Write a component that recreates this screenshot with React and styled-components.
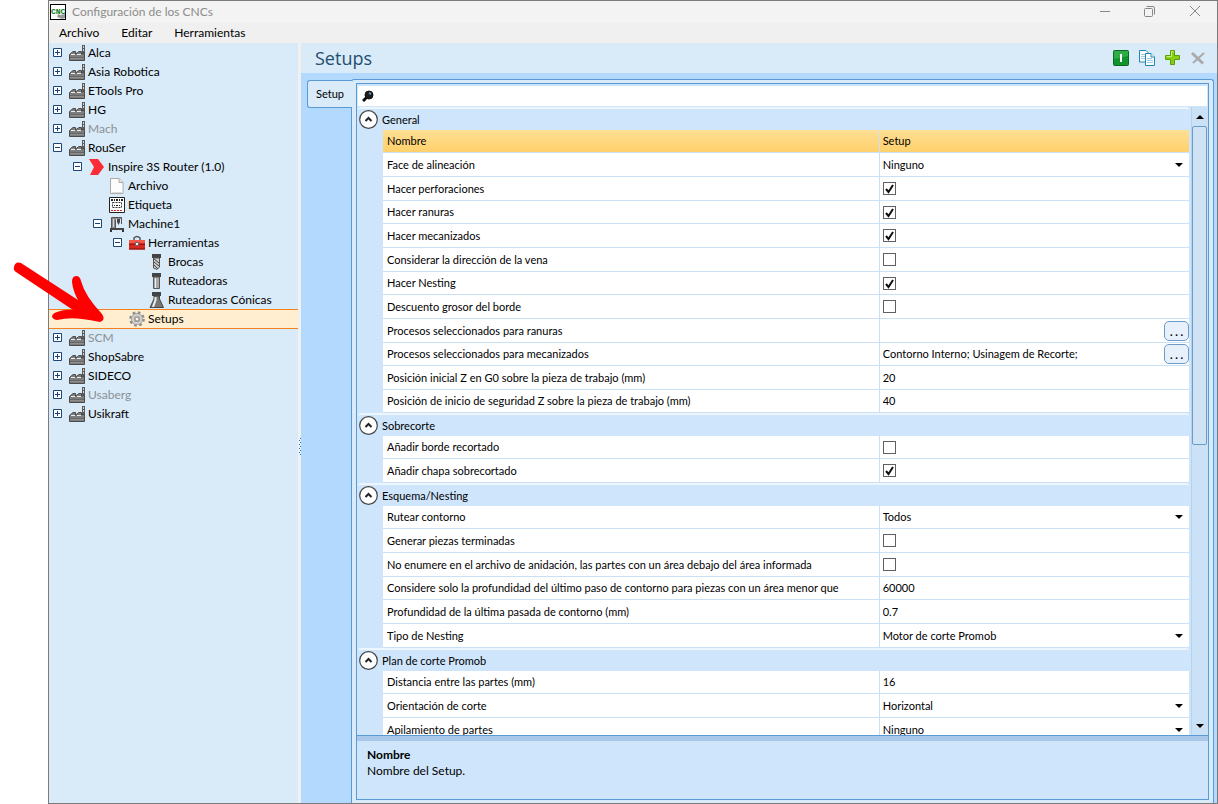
import React, { useState } from 'react';
import styled, { createGlobalStyle, css } from 'styled-components';

const TREE = [
  { label: 'Alca', level: 0, icon: 'factory', state: 'closed' },
  { label: 'Asia Robotica', level: 0, icon: 'factory', state: 'closed' },
  { label: 'ETools Pro', level: 0, icon: 'factory', state: 'closed' },
  { label: 'HG', level: 0, icon: 'factory', state: 'closed' },
  { label: 'Mach', level: 0, icon: 'factory', state: 'closed', muted: true },
  { label: 'RouSer', level: 0, icon: 'factory', state: 'open' },
  { label: 'Inspire 3S Router (1.0)', level: 1, icon: 'chevron', state: 'open' },
  { label: 'Archivo', level: 2, icon: 'file' },
  { label: 'Etiqueta', level: 2, icon: 'tag' },
  { label: 'Machine1', level: 2, icon: 'machine', state: 'open' },
  { label: 'Herramientas', level: 3, icon: 'toolbox', state: 'open' },
  { label: 'Brocas', level: 4, icon: 'drill' },
  { label: 'Ruteadoras', level: 4, icon: 'router' },
  { label: 'Ruteadoras Cónicas', level: 4, icon: 'cone' },
  { label: 'Setups', level: 3, icon: 'gear', selected: true },
  { label: 'SCM', level: 0, icon: 'factory', state: 'closed', muted: true },
  { label: 'ShopSabre', level: 0, icon: 'factory', state: 'closed' },
  { label: 'SIDECO', level: 0, icon: 'factory', state: 'closed' },
  { label: 'Usaberg', level: 0, icon: 'factory', state: 'closed', muted: true },
  { label: 'Usikraft', level: 0, icon: 'factory', state: 'closed' },
];

const SECTIONS = [
  {
    title: 'General',
    rows: [
      { label: 'Nombre', type: 'text', value: 'Setup', selected: true },
      { label: 'Face de alineación', type: 'select', value: 'Ninguno' },
      { label: 'Hacer perforaciones', type: 'check', value: true },
      { label: 'Hacer ranuras', type: 'check', value: true },
      { label: 'Hacer mecanizados', type: 'check', value: true },
      { label: 'Considerar la dirección de la vena', type: 'check', value: false },
      { label: 'Hacer Nesting', type: 'check', value: true },
      { label: 'Descuento grosor del borde', type: 'check', value: false },
      { label: 'Procesos seleccionados para ranuras', type: 'dialog', value: '' },
      {
        label: 'Procesos seleccionados para mecanizados',
        type: 'dialog',
        value: 'Contorno Interno; Usinagem de Recorte;',
      },
      { label: 'Posición inicial Z en G0 sobre la pieza de trabajo (mm)', type: 'text', value: '20' },
      {
        label: 'Posición de inicio de seguridad Z sobre la pieza de trabajo (mm)',
        type: 'text',
        value: '40',
      },
    ],
  },
  {
    title: 'Sobrecorte',
    rows: [
      { label: 'Añadir borde recortado', type: 'check', value: false },
      { label: 'Añadir chapa sobrecortado', type: 'check', value: true },
    ],
  },
  {
    title: 'Esquema/Nesting',
    rows: [
      { label: 'Rutear contorno', type: 'select', value: 'Todos' },
      { label: 'Generar piezas terminadas', type: 'check', value: false },
      {
        label: 'No enumere en el archivo de anidación, las partes con un área debajo del área informada',
        type: 'check',
        value: false,
      },
      {
        label: 'Considere solo la profundidad del último paso de contorno para piezas con un área menor que',
        type: 'text',
        value: '60000',
      },
      { label: 'Profundidad de la última pasada de contorno (mm)', type: 'text', value: '0.7' },
      { label: 'Tipo de Nesting', type: 'select', value: 'Motor de corte Promob' },
    ],
  },
  {
    title: 'Plan de corte Promob',
    rows: [
      { label: 'Distancia entre las partes (mm)', type: 'text', value: '16' },
      { label: 'Orientación de corte', type: 'select', value: 'Horizontal' },
      { label: 'Apilamiento de partes', type: 'select', value: 'Ninguno' },
    ],
  },
];

const ICONS = {
  factory: (
    <>
      <path d="M13 0h3v9h-3z" fill="#5a5a5a" />
      <path d="M14 1h1v2h-1zM14 4h1v2h-1z" fill="#d5d5d5" />
      <path d="M.5 15.500V9.500L4 6.500H6.500V9L10 6.500h2.500V9l3-1v7.500z" fill="#7d7d7d" stroke="#4c4c4c" />
      <path d="M2 9.500h4M8 9.500h4" stroke="#ececec" />
      <path d="M1 12.500h14" stroke="#666" />
      <path d="M1 13.500h14" stroke="#8e8e8e" />
    </>
  ),
  chevron: <path d="M0 0h9l6 8-6 8H1l4-8z" fill="#fa2d37" />,
  file: (
    <>
      <path d="M1.500.5h8.500l4 4v11H1.500z" fill="#fdfdfd" stroke="#aaa" />
      <path d="M10 .5v4h4" fill="#e4e4e4" stroke="#aaa" />
      <path d="M3 14.500h10M13.500 7v8" stroke="#ddd" />
    </>
  ),
  tag: (
    <>
      <path d="M.5.5h15v15H.5z" fill="#fff" stroke="#222" />
      <path d="M2 3h12" stroke="#222" strokeWidth="2" strokeDasharray="2 1 1 1" />
      <path d="M3.500 5.500h9v5h-9z" stroke="#333" strokeDasharray="2 1" />
      <path d="M5 8.500h1M7 8.500h2M10 8.500h1" stroke="#222" />
      <path d="M2 13.500h12" stroke="#e02020" strokeDasharray="2 1" />
    </>
  ),
  machine: (
    <>
      <path d="M3 1h9v2H7v9H3z" fill="#8c8c8c" />
      <path d="M2.500 12V1.500H12.500V8" stroke="#555" />
      <path d="M4.500 3v8" stroke="#d5d5d5" />
      <path d="M6.500 12V4" stroke="#555" />
      <path d="M8 3h3v3L9.500 9 8 6z" fill="#444" />
      <path d="M1 12h14v2H1z" fill="#444" />
      <path d="M1 14h2v2H1zM13 14h2v2h-2z" fill="#333" />
    </>
  ),
  toolbox: (
    <>
      <path d="M5 5V3q3-3 6 0V5" fill="none" stroke="#555" strokeWidth="1.500" />
      <path d="M0 5h16v9.500H0z" fill="#d8281f" />
      <path d="M0 5h16v3H0z" fill="#f0564a" />
      <path d="M0 9.500h16" stroke="#9e130d" />
      <path d="M6.500 7.500h3v3h-3z" fill="#f5f5f5" stroke="#666" />
      <path d="M0 14h16" stroke="#8d0f0a" />
    </>
  ),
  drill: (
    <>
      <path d="M3 0h9v4H3z" fill="#444" />
      <path d="M4.500 4h6v9L8 15.500 4.500 14z" fill="#ccc" stroke="#555" />
      <path d="M5 5l5 4M5 8l5 4M5 11l4 4" stroke="#444" />
    </>
  ),
  router: (
    <>
      <path d="M3 0h9v4H3z" fill="#444" />
      <path d="M4.500 4h6v11.500h-6z" fill="#a8a8a8" stroke="#555" />
      <path d="M6.500 5v10" stroke="#eee" />
    </>
  ),
  cone: (
    <>
      <path d="M3 0h9v4H3z" fill="#444" />
      <path d="M5 4h5.500v3l4 8.500H1L5 7z" fill="#777" stroke="#444" />
      <path d="M6.500 5v3L4 15" fill="none" stroke="#eee" strokeWidth="2" />
    </>
  ),
  gear: (
    <>
      <circle cx="8" cy="8" r="6.300" fill="none" stroke="#8c8c8c" strokeWidth="3" strokeDasharray="2.500 2.450" />
      <circle cx="8" cy="8" r="4.200" fill="none" stroke="#999" strokeWidth="3.600" />
      <circle cx="8" cy="8" r="4.200" fill="none" stroke="#cfcfcf" strokeWidth="2.200" />
      <circle cx="8" cy="8" r="2" fill="#fff6e0" stroke="#888" />
    </>
  ),
};

function Icon({ name }) {
  return (
    <svg width="16" height="16" viewBox="0 0 16 16" fill="none" aria-hidden="true">
      {ICONS[name]}
    </svg>
  );
}

function Expander({ open }) {
  return (
    <svg width="9" height="9" viewBox="0 0 9 9" aria-hidden="true">
      <path d="M.5.5h8v8h-8z" fill="#fff" stroke="#1d4575" />
      <path d={open ? 'M2 4.500h5' : 'M2 4.500h5M4.500 2v5'} stroke="#1d3f78" />
    </svg>
  );
}

function Triangle({ up }) {
  return (
    <svg width="8" height="4" viewBox="0 0 8 4" aria-hidden="true">
      <path d={up ? 'M0 4h8L4 0z' : 'M0 0h8L4 4z'} fill="#000" />
    </svg>
  );
}

function TreePanel() {
  const [selected, setSelected] = useState('Setups');
  return (
    <Tree aria-label="CNCs">
      {TREE.map(node => (
        <TreeRow
          key={node.label}
          type="button"
          $level={node.level}
          $muted={node.muted}
          $selected={node.label === selected}
          onClick={() => setSelected(node.label)}
        >
          <ExpanderSlot>{node.state && <Expander open={node.state === 'open'} />}</ExpanderSlot>
          <Icon name={node.icon} />
          <span>{node.label}</span>
        </TreeRow>
      ))}
    </Tree>
  );
}

function Editor({ id, row }) {
  const { type, value } = row;
  if (type === 'check') {
    return (
      <CheckWrap>
        <input type="checkbox" id={id} defaultChecked={value} />
        <svg width="13" height="13" viewBox="0 0 13 13" fill="none" aria-hidden="true">
          <path d="M3 7l2.500 3L10 3" stroke="#111" strokeWidth="2" />
        </svg>
      </CheckWrap>
    );
  }
  if (type === 'select') {
    return (
      <SelectWrap>
        <select id={id} defaultValue={value}>
          <option>{value}</option>
        </select>
        <Triangle />
      </SelectWrap>
    );
  }
  return (
    <TextWrap>
      <input type="text" id={id} defaultValue={value} />
      {type === 'dialog' && (
        <MoreButton type="button" aria-label={`Editar ${row.label}`}>
          . . .
        </MoreButton>
      )}
    </TextWrap>
  );
}

function Section({ section, index }) {
  return (
    <SectionBox>
      <SectionTitle>
        <CollapseButton type="button" aria-label={`Contraer ${section.title}`}>
          <svg width="19" height="19" viewBox="0 0 19 19" fill="none" aria-hidden="true">
            <circle cx="9.500" cy="9.500" r="8.800" fill="#fff" stroke="#444" strokeWidth="1.200" />
            <path d="M6.500 11l3-3 3 3" stroke="#222" strokeWidth="2" />
          </svg>
        </CollapseButton>
        {section.title}
      </SectionTitle>
      <Grid>
        <colgroup>
          <NameCol />
          <col />
        </colgroup>
        <tbody>
          {section.rows.map((row, i) => {
            const id = `prop-${index}-${i}`;
            return (
              <GridRow key={id} $selected={row.selected}>
                <th scope="row">
                  <label htmlFor={id}>{row.label}</label>
                </th>
                <td>
                  <Editor id={id} row={row} />
                </td>
              </GridRow>
            );
          })}
        </tbody>
      </Grid>
    </SectionBox>
  );
}

function WindowControls() {
  return (
    <Controls>
      <button type="button" aria-label="Minimizar">
        <svg width="12" height="12" viewBox="0 0 12 12" aria-hidden="true">
          <path d="M1 5.500h10" stroke="#888" />
        </svg>
      </button>
      <button type="button" aria-label="Restaurar">
        <svg width="12" height="12" viewBox="0 0 12 12" fill="none" stroke="#888" aria-hidden="true">
          <rect x=".5" y="2.500" width="8" height="8" rx="1" />
          <path d="M2.500.5h6.500q1.500 0 1.500 1.500v6.500" />
        </svg>
      </button>
      <button type="button" aria-label="Cerrar">
        <svg width="12" height="12" viewBox="0 0 12 12" stroke="#888" aria-hidden="true">
          <path d="M1 0l10 10M11 0L1 10" />
        </svg>
      </button>
    </Controls>
  );
}

function Toolbar() {
  return (
    <ToolbarBox>
      <button type="button" aria-label="Activar">
        <svg width="16" height="16" viewBox="0 0 16 16" aria-hidden="true">
          <rect x=".5" y=".5" width="15" height="15" rx="1" fill="#12932c" stroke="#0a6b1f" />
          <path d="M1 1h14v5L1 9z" fill="#2fae48" />
          <path d="M7 4h2v8H7z" fill="#fff" />
        </svg>
      </button>
      <button type="button" aria-label="Copiar">
        <svg width="16" height="16" viewBox="0 0 16 16" fill="#fff" stroke="#1f86b8" aria-hidden="true">
          <path d="M.5.500H7l3 3v8.500H.5z" />
          <path d="M2 4.500h4M2 6.500h5M2 8.500h5" stroke="#9ccbe4" />
          <path d="M6.500 3.500H12l3.500 3.500v8.500h-9z" />
          <path d="M12 3.500V7h3.500" />
          <path d="M8 8.500h5M8 10.500h6M8 12.500h6" stroke="#9ccbe4" />
        </svg>
      </button>
      <button type="button" aria-label="Agregar">
        <svg width="16" height="16" viewBox="0 0 16 16" aria-hidden="true">
          <path d="M5.500.5h4v5h5v4h-5v5h-4v-5h-5v-4h5z" fill="#86cf10" stroke="#57a008" />
          <path d="M8.500 1.500h-2v5h-5" stroke="#c8f07a" fill="none" />
        </svg>
      </button>
      <button type="button" aria-label="Eliminar" disabled>
        <svg width="16" height="16" viewBox="0 0 16 16" fill="none" stroke="#aaa" aria-hidden="true">
          <path d="M1 3l11 10.500" strokeWidth="3" />
          <path d="M13 3L2 13" strokeWidth="2" />
        </svg>
      </button>
    </ToolbarBox>
  );
}

export default function App() {
  return (
    <Page>
      <GlobalStyle />
      <Window>
        <TitleBar>
          <svg width="16" height="16" viewBox="0 0 16 16" aria-hidden="true">
            <rect x=".5" y=".5" width="15" height="15" fill="#fff" stroke="#000" />
            <path d="M7 13l1-3 2 1 5-1v4l-3 1z" fill="#999" />
            <text x="1" y="10" fontFamily="Liberation Mono" fontSize="8" fontWeight="700" fill="#0a7a1c">
              CNC
            </text>
          </svg>
          <h1>Configuración de los CNCs</h1>
          <WindowControls />
        </TitleBar>
        <MenuBar>
          <button type="button">Archivo</button>
          <button type="button">Editar</button>
          <button type="button">Herramientas</button>
        </MenuBar>
        <Body>
          <TreePanel />
          <Splitter>
            <svg width="3" height="18" viewBox="0 0 3 18" aria-hidden="true">
              <path
                d="M2 0h1v1H2zM1 2h1v1H1zM2 4h1v1H2zM1 6h1v1H1zM2 8h1v1H2zM1 10h1v1H1zM2 12h1v1H2zM1 14h1v1H1zM2 16h1v1H2z"
                fill="#1976d2"
              />
            </svg>
          </Splitter>
          <Main>
            <MainHeader>
              <h2>Setups</h2>
              <Toolbar />
            </MainHeader>
            <TabArea>
              <TabButton type="button">Setup</TabButton>
              <TabPane>
                <PropertyBox>
                  <SearchBox>
                    <svg width="12" height="12" viewBox="0 0 12 12" aria-hidden="true">
                      <path d="M1 11l4-4" stroke="#111" strokeWidth="3" />
                      <circle cx="7" cy="5" r="4" fill="#1c1c1c" stroke="#111" />
                      <path d="M7 3l2 1" stroke="#5b8fc0" strokeWidth="2" />
                    </svg>
                    <input type="text" aria-label="Buscar" />
                  </SearchBox>
                  <ScrollArea>
                    <Sections>
                      {SECTIONS.map((section, i) => (
                        <Section key={section.title} section={section} index={i} />
                      ))}
                    </Sections>
                    <ScrollBar>
                      <button type="button" aria-label="Subir">
                        <Triangle up />
                      </button>
                      <ScrollTrack>
                        <ScrollThumb />
                      </ScrollTrack>
                      <button type="button" aria-label="Bajar">
                        <Triangle />
                      </button>
                    </ScrollBar>
                  </ScrollArea>
                  <Description>
                    <strong>Nombre</strong>
                    <p>Nombre del Setup.</p>
                  </Description>
                </PropertyBox>
              </TabPane>
            </TabArea>
          </Main>
        </Body>
      </Window>
      <Pointer width="94" height="66" viewBox="0 0 94 66" aria-hidden="true">
        <path
          d="M1 6Q2 0 8 2L65 39Q60 30 59 21Q59 15 63 15Q67 15 68 20Q72 35 89 53Q93 59 87 61Q78 59 69 58Q57 56 44 59Q39 58 39 55Q40 52 44 51Q52 48 60 49L3 11Q0 9 1 6z"
          fill="#f00"
        />
      </Pointer>
    </Page>
  );
}

const GlobalStyle = createGlobalStyle`
  * {
    box-sizing: border-box;
  }
  body {
    margin: 0;
    background: #fff;
    color: #000;
    font-family: Lato, 'Noto Sans', sans-serif;
    font-size: 12px;
    line-height: 16px;
  }
  h1, h2, p {
    margin: 0;
    font-weight: 400;
  }
  button, input, select {
    margin: 0;
    padding: 0;
    border: none;
    border-radius: 0;
    background: none;
    color: inherit;
    font: inherit;
  }
  svg {
    display: block;
    flex: none;
  }
`;

const Page = styled.div`
  position: relative;
  height: 100vh;
  padding-left: 48px;
`;

const Window = styled.div`
  height: 100%;
  display: flex;
  flex-direction: column;
  border: 1px solid #7b7b7b;
  background: #f0f0f0;
`;

const TitleBar = styled.header`
  height: 22px;
  display: flex;
  align-items: center;
  gap: 6px;
  padding-left: 1px;
  background: #f3f3f3;
  h1 {
    flex: 1;
    color: #8c8c8c;
    font-size: 12px;
  }
`;

const Controls = styled.div`
  display: flex;
  button {
    width: 45px;
    display: flex;
    justify-content: center;
  }
`;

const MenuBar = styled.nav`
  height: 20px;
  display: flex;
  align-items: center;
  gap: 22px;
  padding-left: 10px;
`;

const Body = styled.div`
  flex: 1;
  min-height: 0;
  display: flex;
`;

const Tree = styled.nav`
  width: 249px;
  flex: none;
  background: #d9eaf8;
`;

const TreeRow = styled.button`
  width: 100%;
  height: 19px;
  display: flex;
  align-items: center;
  gap: 3px;
  padding-left: ${({ $level }) => 4 + $level * 20}px;
  color: ${({ $muted }) => ($muted ? '#8b9096' : '#000')};
  white-space: nowrap;
  ${({ $selected }) =>
    $selected &&
    css`
      border-top: 1px solid #f58220;
      background: #ffefd0;
      box-shadow: 0 1px #f58220;
    `}
`;

const ExpanderSlot = styled.span`
  width: 13px;
  flex: none;
`;

const Splitter = styled.div`
  width: 3px;
  flex: none;
  display: flex;
  align-items: center;
  padding-top: 48px;
`;

const Main = styled.main`
  flex: 1;
  min-width: 0;
  display: flex;
  flex-direction: column;
  background: #b3d9ff;
`;

const MainHeader = styled.div`
  height: 30px;
  display: flex;
  align-items: center;
  justify-content: space-between;
  padding: 0 10px 0 14px;
  background: #d9eaf8;
  h2 {
    color: #1f4e6e;
    font-family: 'Open Sans', 'Noto Sans', sans-serif;
    font-size: 18px;
    line-height: 24px;
  }
`;

const ToolbarBox = styled.div`
  display: flex;
  gap: 10px;
`;

const TabArea = styled.div`
  flex: 1;
  min-height: 0;
  display: flex;
  align-items: flex-start;
  padding: 6px 3px 0 6px;
`;

const TabButton = styled.button`
  position: relative;
  z-index: 1;
  width: 45px;
  height: 28px;
  flex: none;
  margin: 1px -1px 0 0;
  border: 1px solid #5b9bd5;
  border-right: none;
  border-radius: 3px 0 0 3px;
  background: #d9eaf8;
  font-size: 11px;
`;

const TabPane = styled.section`
  flex: 1;
  min-width: 0;
  align-self: stretch;
  display: flex;
  padding: 3px 4px;
  border: 1px solid #5b9bd5;
  border-bottom: none;
  border-radius: 3px 3px 0 0;
  background: #d9eaf8;
`;

const PropertyBox = styled.div`
  flex: 1;
  min-width: 0;
  display: flex;
  flex-direction: column;
  border: 1px solid #5b9bd5;
  background: #cfe5fc;
`;

const SearchBox = styled.div`
  height: 20px;
  flex: none;
  display: flex;
  align-items: center;
  gap: 4px;
  margin: 2px 1px 1px;
  padding: 0 4px;
  background: #fff;
  input {
    flex: 1;
    outline: none;
  }
`;

const ScrollArea = styled.div`
  flex: 1;
  min-height: 0;
  display: flex;
  overflow: hidden;
`;

const Sections = styled.div`
  flex: 1;
  min-width: 0;
  padding: 0 2px 0 1px;
`;

const SectionBox = styled.section`
  padding-left: 25px;
`;

const SectionTitle = styled.h3`
  height: 23px;
  display: flex;
  align-items: center;
  gap: 4px;
  margin: 0 0 0 -25px;
  padding-left: 1px;
  border-top: 2px solid #edf5fe;
  border-radius: 3px 3px 0 0;
  font-size: 11px;
  font-weight: 400;
`;

const CollapseButton = styled.button`
  flex: none;
  height: 19px;
`;

const Grid = styled.table`
  width: 100%;
  table-layout: fixed;
  border-spacing: 0;
  background: #fff;
  font-size: 11px;
`;

const NameCol = styled.col`
  width: 61.5%;
`;

const GridRow = styled.tr`
  height: 24px;
  &:nth-child(3n + 1),
  &:nth-child(12n) {
    height: 23px;
  }
  background: ${({ $selected }) => ($selected ? 'linear-gradient(#ffdf94, #ffd06a)' : '#fff')};
  th,
  td {
    padding: 0 0 0 4px;
    border-bottom: 1px solid #cbe0f5;
    font-weight: 400;
    text-align: left;
    vertical-align: middle;
    white-space: nowrap;
  }
  td {
    padding: 0 0 0 3px;
    border-left: 1px solid #cbe0f5;
  }
`;

const CheckWrap = styled.span`
  display: grid;
  width: 13px;
  height: 13px;
  input,
  svg {
    grid-area: 1 / 1;
  }
  input {
    width: 13px;
    height: 13px;
    appearance: none;
    border: 1px solid #606060;
    background: #fff;
  }
  svg {
    visibility: hidden;
    pointer-events: none;
  }
  input:checked + svg {
    visibility: visible;
  }
`;

const SelectWrap = styled.span`
  display: flex;
  align-items: center;
  padding-right: 6px;
  select {
    flex: 1;
    appearance: none;
    outline: none;
  }
`;

const TextWrap = styled.span`
  display: flex;
  align-items: center;
  input {
    flex: 1;
    min-width: 0;
    outline: none;
  }
`;

const MoreButton = styled.button`
  width: 25px;
  height: 20px;
  flex: none;
  padding-top: 2px;
  border: 1px solid #6d9bc8;
  border-radius: 5px;
  background: #e7f0fb;
  font-weight: 700;
`;

const ScrollBar = styled.div`
  width: 17px;
  flex: none;
  display: flex;
  flex-direction: column;
  border-left: 1px solid #b5d2ee;
  background: #cbe1f5;
  button {
    height: 19px;
    display: flex;
    align-items: center;
    justify-content: center;
  }
`;

const ScrollTrack = styled.div`
  flex: 1;
  padding-right: 1px;
`;

const ScrollThumb = styled.div`
  height: 54%;
  border: 1px solid #6d9bc8;
  border-radius: 2px;
  background: #cfe3f5;
`;

const Description = styled.div`
  flex: none;
  min-height: 64px;
  padding: 6px 10px;
  border-top: 1px solid #5b9bd5;
  box-shadow: inset 0 5px #a9c8e9;
  strong {
    display: block;
    padding-top: 5px;
  }
`;

const Pointer = styled.svg`
  position: absolute;
  left: 13px;
  top: 261px;
  pointer-events: none;
`;
